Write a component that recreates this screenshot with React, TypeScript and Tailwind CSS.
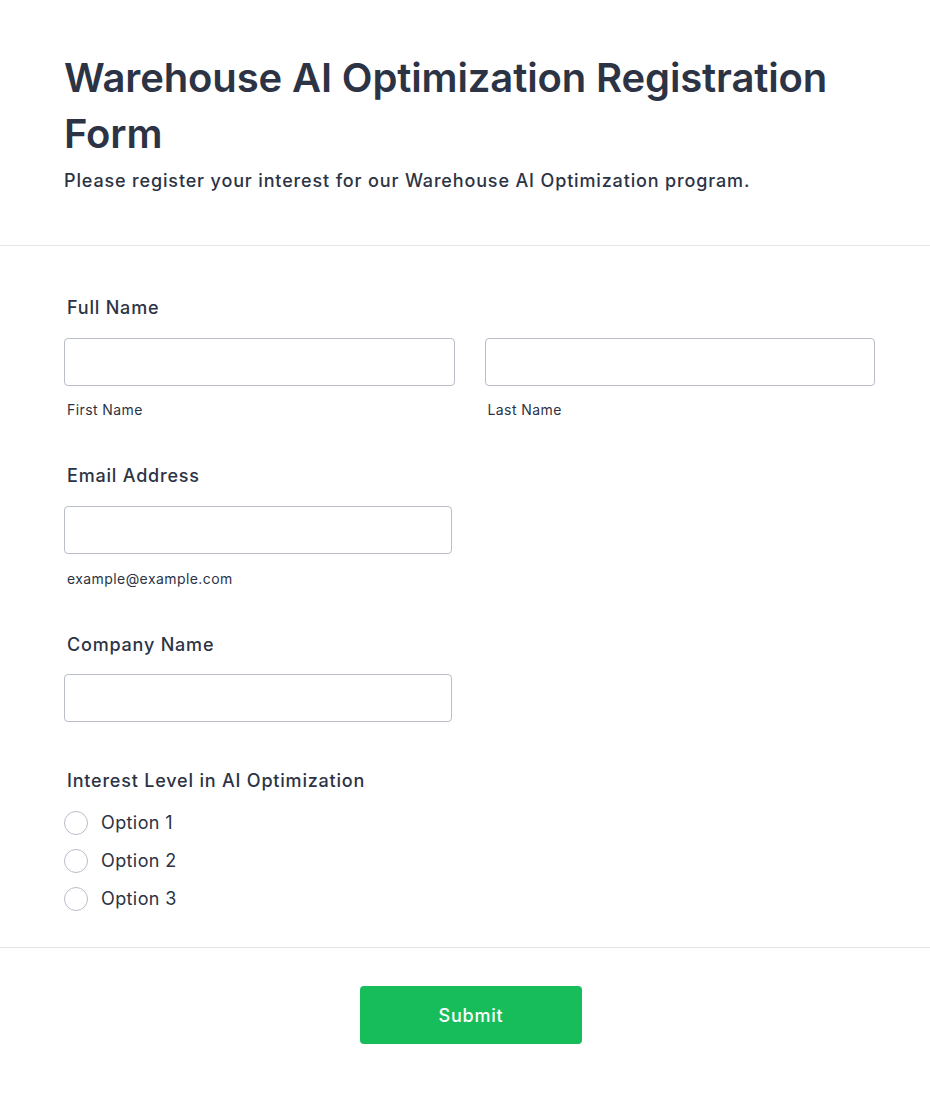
import React from "react";

function Label({ children }: { children: React.ReactNode }) {
  return (
    <div className="ml-[3px] text-[18px] leading-[24px] font-medium tracking-[0.8px] text-[#2c3345]">{children}</div>
  );
}

function Input({ className = "" }: { className?: string }) {
  return (
    <input
      type="text"
      className={"block h-[48px] rounded-[4px] border border-[#b8bdc9] bg-white outline-none " + className}
    />
  );
}

function Sub({ children }: { children: React.ReactNode }) {
  return <div className="ml-[3px] text-[14px] leading-[20px] tracking-[0.42px] text-[#2c3345]">{children}</div>;
}

function Radio({ label }: { label: string }) {
  return (
    <label className="flex h-[38px] items-center gap-[13px]">
      <span className="block h-[24px] w-[24px] rounded-full border border-[#b8bdc9] bg-white" />
      <span className="text-[18px] leading-[24px] tracking-[0.4px] text-[#2c3345]">{label}</span>
    </label>
  );
}

export default function App() {
  return (
    <div className="min-h-[1094px] w-[930px] bg-white text-[#2c3345]" style={{ fontFamily: "Inter, 'Noto Sans', sans-serif" }}>
      <header className="border-b border-[#e3e5ea] pl-[64px] pr-[55px] pt-[50px] pb-[53px]">
        <h1 className="text-[40px] leading-[56px] font-semibold tracking-[-0.13px] text-[#2c3345]">
          Warehouse AI Optimization Registration Form
        </h1>
        <p className="mt-[8px] text-[18px] leading-[22px] font-medium tracking-[0.85px] text-[#2c3345]">
          Please register your interest for our Warehouse AI Optimization program.
        </p>
      </header>

      <main className="border-b border-[#e3e5ea] pl-[64px] pr-[55px] pt-[50px] pb-[29px]">
        <Label>Full Name</Label>
        <div className="mt-[18px] grid grid-cols-2 gap-[30px]">
          <div>
            <Input className="w-full" />
            <div className="mt-[14px]"><Sub>First Name</Sub></div>
          </div>
          <div>
            <Input className="w-full" />
            <div className="mt-[14px]"><Sub>Last Name</Sub></div>
          </div>
        </div>

        <div className="mt-[44px]"><Label>Email Address</Label></div>
        <Input className="mt-[18px] w-[388px]" />
        <div className="mt-[15px]"><Sub>example@example.com</Sub></div>

        <div className="mt-[44px]"><Label>Company Name</Label></div>
        <Input className="mt-[17px] w-[388px]" />

        <div className="mt-[47px]"><Label>Interest Level in AI Optimization</Label></div>
        <div className="mt-[11px] flex flex-col">
          <Radio label="Option 1" />
          <Radio label="Option 2" />
          <Radio label="Option 3" />
        </div>
      </main>

      <footer className="flex justify-center pl-[12px] pt-[38px] pb-[50px]">
        <button className="h-[58px] w-[222px] rounded-[4px] bg-[#18bd5b] text-[18px] font-medium tracking-[0.8px] text-white">
          Submit
        </button>
      </footer>
    </div>
  );
}
